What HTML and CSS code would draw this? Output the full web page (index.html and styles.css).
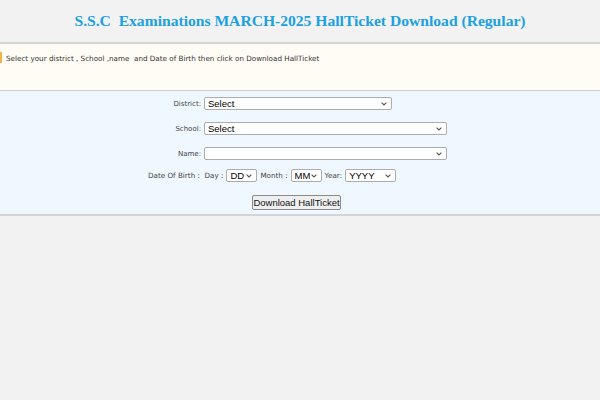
FILE: index.html
```html
<!DOCTYPE html>
<html lang="en">
<head>
    <meta charset="UTF-8">
    <title>SSC Hall Ticket</title>
    <link rel="stylesheet" href="styles.css">
</head>
<body>
    <div class="header">
        <h1>S.S.C&nbsp; Examinations MARCH-2025 HallTicket Download (Regular)</h1>
    </div>

    <!-- Instruction box -->
    <div class="note">
        <span class="mark"></span>
        <span>Select your district , School ,name &nbsp;and Date of Birth then click on Download HallTicket</span>
    </div>

    <!-- Form -->
    <div class="form">
        <div class="grid">
            <label class="lbl" for="district">District:</label>
            <div><select id="district" class="sel-district"><option>Select</option></select></div>

            <label class="lbl" for="school">School:</label>
            <div><select id="school" class="sel-wide"><option>Select</option></select></div>

            <label class="lbl" for="name">Name:</label>
            <div><select id="name" class="sel-wide"><option></option></select></div>

            <div class="dob">
                <span class="lbl">Date Of Birth : &nbsp;Day :</span>
                <select class="sel-day"><option>DD</option></select>
                <span class="lbl">Month :</span>
                <select class="sel-month"><option>MM</option></select>
                <span class="lbl">Year:</span>
                <select class="sel-year"><option>YYYY</option></select>
            </div>

            <div class="actions">
                <button>Download HallTicket</button>
            </div>
        </div>
    </div>
</body>
</html>
```

FILE: styles.css
```css
body {
    margin: 0;
    background-color: #f2f2f2;
    font-family: "DejaVu Sans", Verdana, sans-serif;
}
.header {
    height: 42px;
    display: flex;
    align-items: center;
    justify-content: center;
    border-bottom: 2px solid #d4d4d4;
}
.header h1 {
    margin: 0;
    font-family: "Liberation Serif", "Times New Roman", serif;
    font-size: 15.6px;
    font-weight: bold;
    color: #1ba1e0;
}
.note {
    height: 47px;
    background-color: #fffcf5;
    border-bottom: 1px solid #cfcfcf;
    display: flex;
    align-items: flex-start;
    padding-top: 10px;
    box-sizing: border-box;
    font-size: 7.2px;
    color: #333;
}
.mark {
    width: 2px;
    height: 11px;
    background-color: #f0b24a;
    margin-right: 4px;
    margin-top: -2px;
}
.form {
    height: 125px;
    background-color: #eef8fe;
    border-bottom: 2px solid #d4d4d4;
    box-sizing: border-box;
    padding-top: 6px;
}
.grid {
    display: grid;
    grid-template-columns: 204px 1fr;
    row-gap: 12px;
    align-items: center;
}
.lbl {
    font-size: 7px;
    color: #444;
}
.grid > label.lbl {
    text-align: right;
    padding-right: 3px;
}
select {
    appearance: none;
    -webkit-appearance: none;
    font-family: "Liberation Sans", Arial, sans-serif;
    font-size: 9.5px;
    height: 13px;
    padding: 0 8px 0 3px;
    color: #000;
    background-color: #fff;
    background-image: url("data:image/svg+xml;utf8,<svg xmlns='http://www.w3.org/2000/svg' width='6' height='4' viewBox='0 0 6 4'><path d='M0.6 0.6 L3 3 L5.4 0.6' fill='none' stroke='%23555' stroke-width='1.1'/></svg>");
    background-repeat: no-repeat;
    background-position: right 4px center;
    border: 1px solid #acacac;
    border-radius: 2px;
    display: block;
}
.sel-district { width: 188px; }
.sel-wide { width: 243px; }
.sel-day { width: 31px; }
.sel-month { width: 31px; }
.sel-year { width: 51px; }
.dob {
    grid-column: 1 / -1;
    display: flex;
    align-items: center;
    gap: 3px;
    padding-left: 148px;
    margin-top: -3px;
}
.dob .lbl {
    font-size: 7.2px;
}
.actions {
    grid-column: 1 / -1;
    padding-left: 252px;
    margin-top: -3px;
}
button {
    font-family: "Liberation Sans", Arial, sans-serif;
    font-size: 9.5px;
    width: 89px;
    height: 15px;
    padding: 0;
    color: #111;
    background-color: #efefef;
    border: 1px solid #8a8a8a;
    border-radius: 2px;
}
```
